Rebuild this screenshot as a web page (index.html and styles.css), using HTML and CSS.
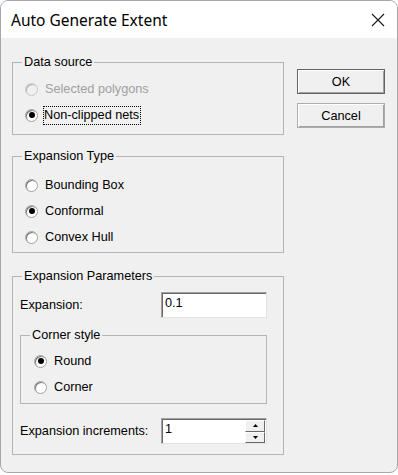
FILE: index.html
```html
<!DOCTYPE html>
<html lang="en">
<head>
    <meta charset="UTF-8">
    <title>Auto Generate Extent</title>
    <link rel="stylesheet" href="styles.css">
</head>
<body>
    <div class="window">
        <div class="titlebar">
            <span class="title">Auto Generate Extent</span>
            <button class="close" aria-label="Close">
                <svg width="14" height="14" viewBox="0 0 14 14"><path d="M1 1 L13 13 M13 1 L1 13" stroke="#1a1a1a" stroke-width="1.1" fill="none"/></svg>
            </button>
        </div>

        <div class="dialog">
            <div class="left-col">
                <fieldset class="group group-source">
                    <legend>Data source</legend>
                    <label class="radio disabled"><span class="dot"></span><span>Selected polygons</span></label>
                    <label class="radio checked"><span class="dot"></span><span class="focus">Non-clipped nets</span></label>
                </fieldset>

                <fieldset class="group group-type">
                    <legend>Expansion Type</legend>
                    <label class="radio"><span class="dot"></span><span>Bounding Box</span></label>
                    <label class="radio checked"><span class="dot"></span><span>Conformal</span></label>
                    <label class="radio"><span class="dot"></span><span>Convex Hull</span></label>
                </fieldset>

                <fieldset class="group group-params">
                    <legend>Expansion Parameters</legend>
                    <div class="field-row">
                        <span>Expansion:</span>
                        <div class="textbox">0.1</div>
                    </div>

                    <fieldset class="group group-corner">
                        <legend>Corner style</legend>
                        <label class="radio checked"><span class="dot"></span><span>Round</span></label>
                        <label class="radio"><span class="dot"></span><span>Corner</span></label>
                    </fieldset>

                    <div class="field-row row-increments">
                        <span>Expansion increments:</span>
                        <div class="textbox spin">
                            <span class="spin-value">1</span>
                            <div class="spin-buttons">
                                <span class="spin-btn"><svg width="5" height="3" viewBox="0 0 5 3"><path d="M2.5 0 L5 3 L0 3 Z" fill="#000"/></svg></span>
                                <span class="spin-btn"><svg width="5" height="3" viewBox="0 0 5 3"><path d="M0 0 L5 0 L2.5 3 Z" fill="#000"/></svg></span>
                            </div>
                        </div>
                    </div>
                </fieldset>
            </div>

            <div class="right-col">
                <button class="btn btn-default">OK</button>
                <button class="btn">Cancel</button>
            </div>
        </div>
    </div>
</body>
</html>
```

FILE: styles.css
```css
* {
    margin: 0;
    padding: 0;
    box-sizing: border-box;
}

body {
    background: #fff;
    font-family: 'Liberation Sans', Arial, sans-serif;
    font-size: 12.7px;
    color: #000;
}

.window {
    width: 398px;
    height: 473px;
    border: 1px solid #a8a8a8;
    border-radius: 8px;
    overflow: hidden;
    display: flex;
    flex-direction: column;
    background: #f0f0f0;
}

.titlebar {
    height: 37px;
    background: #fff;
    display: flex;
    align-items: center;
    justify-content: space-between;
    padding: 0 12px 0 10px;
}

.title {
    font-family: 'Noto Sans', sans-serif;
    font-size: 15.5px;
    color: #000;
    padding-top: 1px;
}

.close {
    border: none;
    background: none;
    width: 14px;
    height: 14px;
    display: flex;
}

.dialog {
    flex: 1;
    display: flex;
    gap: 13px;
    padding: 17px 0 0 11px;
}

.left-col {
    width: 272px;
    display: flex;
    flex-direction: column;
}

.right-col {
    width: 88px;
    display: flex;
    flex-direction: column;
    gap: 9px;
    padding-top: 14px;
}

/* group boxes */
.group {
    border: 1px solid #b4b4b4;
    min-width: 0;
    padding: 0 0 0 12px;
}

.group legend {
    line-height: 14px;
    padding: 0 2px;
    margin-left: -3px;
}

.group-source {
    padding-top: 7px;
    padding-bottom: 6px;
}

.group-type {
    margin-top: 14px;
    padding-top: 9px;
    padding-bottom: 2px;
}

.group-params {
    margin-top: 16px;
    padding: 9px 16px 10px 7px;
}

.group-params > legend {
    margin-left: 2px;
}

.group-corner {
    margin-top: 10px;
    padding: 6px 0 3px 13px;
}

.group-corner > legend {
    margin-left: -4px;
}

/* radios */
.radio {
    height: 26px;
    display: flex;
    align-items: center;
    gap: 7px;
}

.radio .dot {
    width: 13px;
    height: 13px;
    border-radius: 50%;
    background: #fff;
    border: 1px solid #a0a0a0;
    box-shadow: inset 1px 1px 0 #7a7a7a;
    display: flex;
    align-items: center;
    justify-content: center;
}

.radio.checked .dot::after {
    content: '';
    width: 6px;
    height: 6px;
    border-radius: 50%;
    background: #000;
}

.radio.disabled {
    color: #a0a0a0;
}

.radio.disabled .dot {
    background: #f0f0f0;
    border-color: #c8c8c8;
    box-shadow: inset 1px 1px 0 #b4b4b4;
}

.focus {
    outline: 1px dotted #000;
    padding: 1px 1px 2px 0;
    margin-left: -1px;
}

/* text fields */
.field-row {
    display: flex;
    align-items: center;
    justify-content: space-between;
}

.row-increments {
    margin-top: 14px;
}

.textbox {
    width: 106px;
    height: 26px;
    background: #fff;
    border-top: 1px solid #a0a0a0;
    border-left: 1px solid #a0a0a0;
    border-right: 1px solid #e3e3e3;
    border-bottom: 1px solid #e3e3e3;
    box-shadow: inset 1px 1px 0 #696969;
    padding: 3px 0 0 3px;
    line-height: 14px;
}

.spin {
    display: flex;
    justify-content: space-between;
    padding: 0 1px 0 0;
}

.spin-value {
    padding: 3px 0 0 3px;
}

.spin-buttons {
    width: 20px;
    display: flex;
    flex-direction: column;
    padding-top: 1px;
}

.spin-btn {
    flex: 1;
    background: #f0f0f0;
    border-top: 1px solid #fff;
    border-left: 1px solid #fff;
    border-right: 1px solid #696969;
    border-bottom: 1px solid #696969;
    display: flex;
    align-items: center;
    justify-content: center;
}

/* buttons */
.btn {
    height: 25px;
    font-family: 'Liberation Sans', Arial, sans-serif;
    font-size: 12.7px;
    color: #000;
    background: #f0f0f0;
    border: 1px solid #adadad;
    box-shadow: inset 1px 1px 0 #fff, inset -1px -1px 0 #a0a0a0;
}

.btn-default {
    border-color: #646464;
}
```
